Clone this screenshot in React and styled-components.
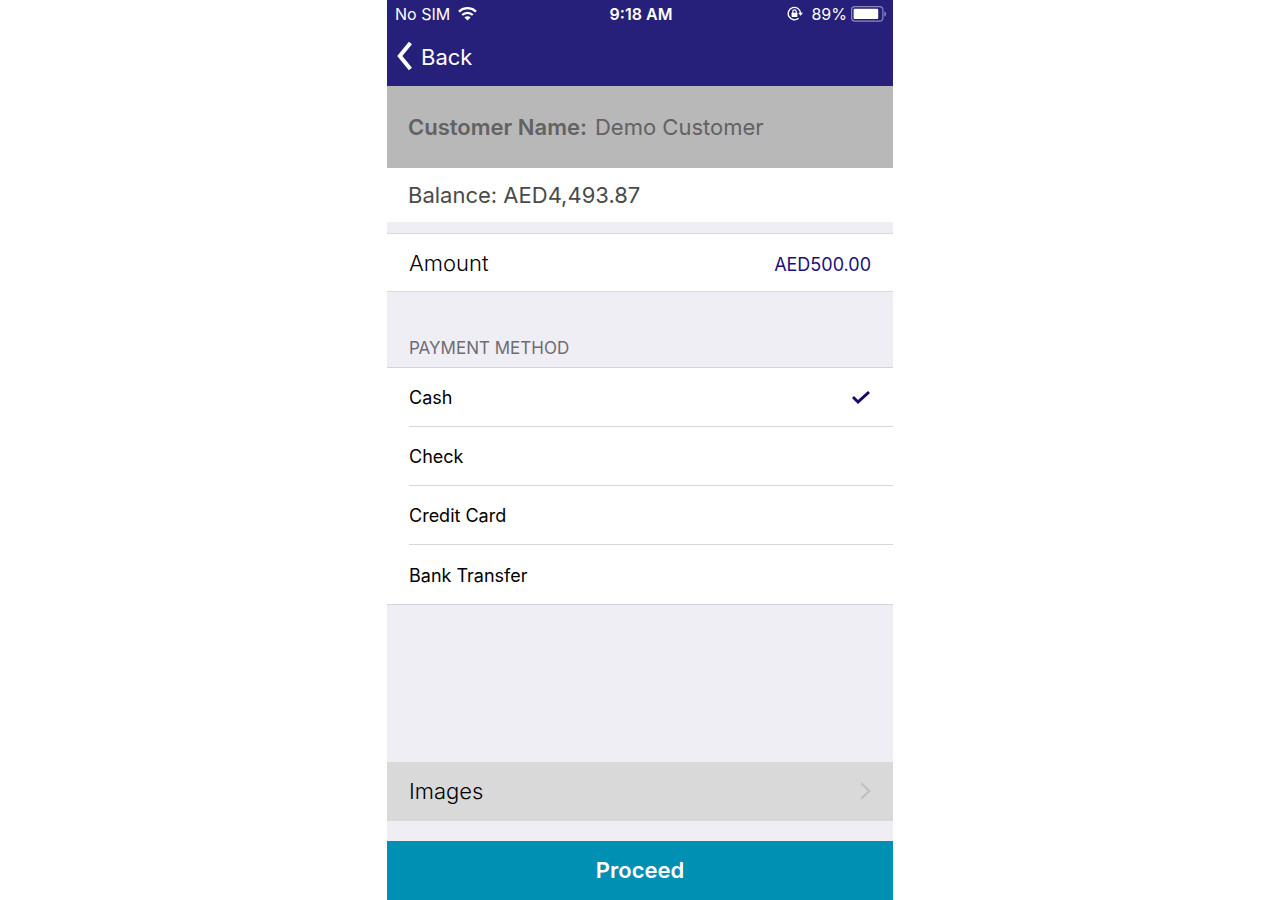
import React, { useState } from "react";
import styled, { createGlobalStyle } from "styled-components";

const GlobalStyle = createGlobalStyle`
  *, *::before, *::after { box-sizing: border-box; }
  body {
    margin: 0;
    background: #ffffff;
    font-family: Inter, "Liberation Sans", sans-serif;
    color: #000000;
  }
  button, input { font: inherit; color: inherit; }
`;

const Screen = styled.main`
  display: flex;
  flex-direction: column;
  width: 100%;
  max-width: 506px;
  min-height: 100vh;
  margin: 0 auto;
  background: #efeef4;
`;

const Header = styled.header`
  background: #26207a;
  color: #ffffff;
`;

const StatusBar = styled.div`
  display: grid;
  grid-template-columns: 1fr auto 1fr;
  align-items: center;
  height: 28px;
  padding: 0 6px 0 8px;
  font-size: 16px;
  line-height: 20px;
`;

const StatusGroup = styled.div`
  display: flex;
  align-items: center;
  justify-content: ${({ $end }) => ($end ? "flex-end" : "flex-start")};
  gap: ${({ $end }) => ($end ? "4px" : "8px")};
`;

const LockSlot = styled.span`
  display: flex;
  margin-right: 4px;
`;

const Clock = styled.time`
  font-weight: 600;
`;

const NavBar = styled.nav`
  display: flex;
  align-items: center;
  height: 58px;
  padding: 0 10px;
`;

const BackButton = styled.button`
  display: flex;
  align-items: center;
  gap: 8px;
  padding: 0;
  border: 0;
  background: none;
  font-size: 22px;
  line-height: 28px;
  cursor: pointer;
`;

const CustomerBar = styled.section`
  display: flex;
  align-items: center;
  gap: 8px;
  min-height: 82px;
  padding: 0 21px;
  background: #b8b8b8;
  color: #626262;
  font-size: 22px;
  line-height: 28px;
`;

const CustomerLabel = styled.span`
  font-weight: 600;
`;

const BalanceBar = styled.section`
  display: flex;
  align-items: center;
  min-height: 54px;
  margin-bottom: 11px;
  padding: 0 21px;
  background: #ffffff;
  color: #4a4a4a;
  font-size: 22px;
  line-height: 28px;
`;

const AmountRow = styled.label`
  display: flex;
  align-items: center;
  justify-content: space-between;
  height: 59px;
  padding: 0 22px;
  border: solid #d9d9dc;
  border-width: 1px 0;
  background: #ffffff;
  font-size: 22px;
  line-height: 28px;
  font-weight: 300;
`;

const AmountInput = styled.input`
  flex: 1;
  min-width: 0;
  padding: 4px 0 0;
  border: 0;
  background: none;
  color: #1b0f7c;
  font-size: 18px;
  font-weight: 400;
  text-align: right;
`;

const Methods = styled.fieldset`
  margin: 0;
  padding: 0;
  border: 0;
  min-width: 0;
`;

const MethodsTitle = styled.legend`
  display: flex;
  align-items: flex-end;
  width: 100%;
  height: 75px;
  padding: 0 22px 8px;
  color: #6d6d72;
  font-size: 17px;
  line-height: 22px;
`;

const MethodList = styled.div`
  padding-left: 22px;
  border: solid #d4d4d8;
  border-width: 1px 0;
  background: #ffffff;
`;

const MethodRow = styled.label`
  display: flex;
  align-items: center;
  justify-content: space-between;
  height: 59px;
  padding: 2px 22px 0 0;
  font-size: 18px;
  line-height: 24px;
  cursor: pointer;

  &:not(:last-child) {
    border-bottom: 1px solid #d8d8db;
  }
`;

const MethodRadio = styled.input`
  appearance: none;
  width: 20px;
  height: 20px;
  margin: 0;
  order: 1;
  display: grid;
  place-items: center;

  &:checked::before {
    content: "";
    width: 20px;
    height: 20px;
    background: #130a6b;
    clip-path: polygon(1px 10px, 3px 8px, 7px 12px, 17px 3px, 19px 5px, 7px 16px);
  }
`;

const Footer = styled.footer`
  display: flex;
  flex-direction: column;
  gap: 20px;
  margin-top: auto;
`;

const ImagesButton = styled.button`
  display: flex;
  align-items: center;
  justify-content: space-between;
  height: 59px;
  padding: 0 22px 2px;
  border: 0;
  background: #d9d9d9;
  font-size: 22px;
  line-height: 28px;
  font-weight: 300;
  cursor: pointer;
`;

const ProceedButton = styled.button`
  height: 59px;
  padding: 0 0 2px;
  border: 0;
  background: #0090b4;
  color: #ffffff;
  font-size: 22px;
  line-height: 28px;
  font-weight: 600;
  cursor: pointer;
`;

function WifiIcon() {
  return (
    <svg width="20" height="14" viewBox="0 0 20 14" fill="none" aria-hidden="true">
      <path d="M1 4.6a12.2 12.2 0 0 1 17 0" stroke="currentColor" strokeWidth="2.4" />
      <path d="M4.2 8a7.5 7.5 0 0 1 10.6 0" stroke="currentColor" strokeWidth="2.3" />
      <path d="M9.5 13.6 6.4 10.5a4.4 4.4 0 0 1 6.2 0Z" fill="currentColor" />
    </svg>
  );
}

function RotationLockIcon() {
  return (
    <svg width="16" height="16" viewBox="0 0 16 16" fill="none" aria-hidden="true">
      <path d="M11.6 12.2A6.2 6.2 0 1 1 13.6 7.1" stroke="currentColor" strokeWidth="1.4" />
      <path d="M11.2 6.8h4.8l-2.4 3Z" fill="currentColor" />
      <rect x="4.6" y="6.7" width="5.8" height="4.2" rx="0.6" fill="currentColor" />
      <path d="M5.8 6.9V5.5a1.7 1.7 0 0 1 3.4 0v1.4" stroke="currentColor" strokeWidth="1.2" />
    </svg>
  );
}

function BatteryIcon() {
  return (
    <svg width="36" height="16" viewBox="0 0 36 16" fill="none" aria-hidden="true">
      <rect x="0.6" y="0.6" width="31.3" height="14.6" rx="3.4" stroke="#8d89bb" strokeWidth="1.2" />
      <rect x="2.6" y="2.8" width="24.6" height="10.3" rx="1" fill="currentColor" />
      <path d="M33.4 5.4c2.2.6 2.2 4.4 0 5Z" fill="#8d89bb" />
    </svg>
  );
}

function BackIcon() {
  return (
    <svg width="16" height="30" viewBox="0 0 16 30" fill="none" aria-hidden="true">
      <path d="M13.4 1 2.8 14l10.6 13" stroke="currentColor" strokeWidth="4" />
    </svg>
  );
}

function ChevronIcon() {
  return (
    <svg width="11" height="18" viewBox="0 0 11 18" fill="none" aria-hidden="true">
      <path d="m1.2 1.2 8.1 7.8-8.1 7.8" stroke="#bfbfc4" strokeWidth="2" />
    </svg>
  );
}

const METHODS = ["Cash", "Check", "Credit Card", "Bank Transfer"];

export default function App() {
  const [method, setMethod] = useState("Cash");
  const [amount, setAmount] = useState("AED500.00");

  return (
    <>
      <GlobalStyle />
      <Screen>
        <Header>
          <StatusBar>
            <StatusGroup>
              <span>No SIM</span>
              <WifiIcon />
            </StatusGroup>
            <Clock>9:18 AM</Clock>
            <StatusGroup $end>
              <LockSlot>
                <RotationLockIcon />
              </LockSlot>
              <span>89%</span>
              <BatteryIcon />
            </StatusGroup>
          </StatusBar>
          <NavBar>
            <BackButton type="button">
              <BackIcon />
              Back
            </BackButton>
          </NavBar>
        </Header>

        <CustomerBar>
          <CustomerLabel>Customer Name:</CustomerLabel>
          <span>Demo Customer</span>
        </CustomerBar>
        <BalanceBar>Balance: AED4,493.87</BalanceBar>

        <AmountRow>
          Amount
          <AmountInput
            type="text"
            value={amount}
            onChange={(event) => setAmount(event.target.value)}
          />
        </AmountRow>

        <Methods>
          <MethodsTitle>PAYMENT METHOD</MethodsTitle>
          <MethodList>
            {METHODS.map((name) => (
              <MethodRow key={name}>
                <MethodRadio
                  type="radio"
                  name="payment-method"
                  value={name}
                  checked={method === name}
                  onChange={() => setMethod(name)}
                />
                {name}
              </MethodRow>
            ))}
          </MethodList>
        </Methods>

        <Footer>
          <ImagesButton type="button">
            Images
            <ChevronIcon />
          </ImagesButton>
          <ProceedButton type="button">Proceed</ProceedButton>
        </Footer>
      </Screen>
    </>
  );
}
